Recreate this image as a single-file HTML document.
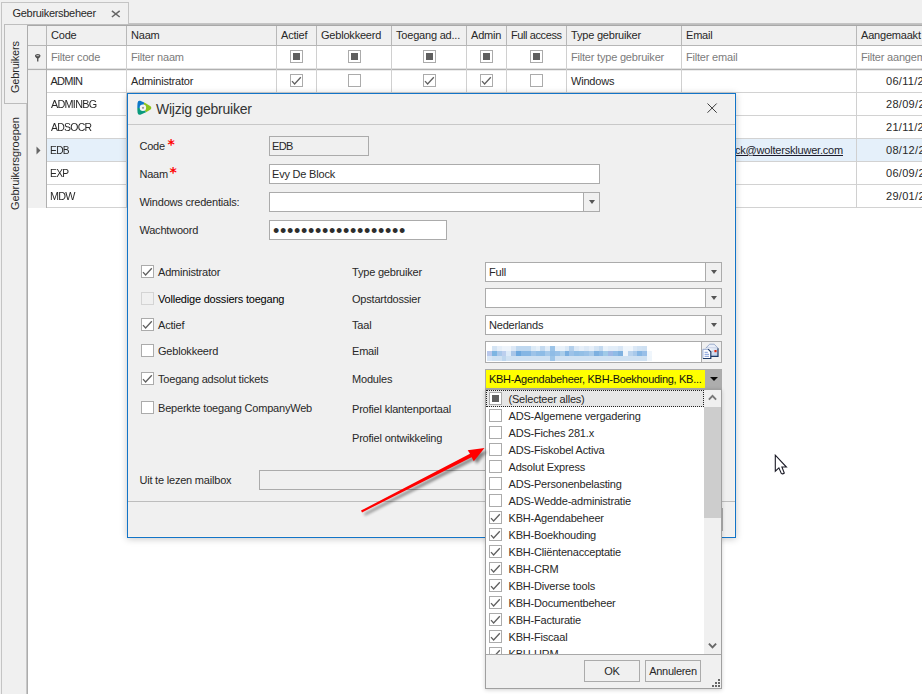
<!DOCTYPE html>
<html lang="nl"><head><meta charset="utf-8"><title>Gebruikersbeheer</title>
<style>
*{box-sizing:border-box;margin:0;padding:0}
html,body{width:922px;height:694px;overflow:hidden;background:#f0f0f0}
body{position:relative;font-family:"Liberation Sans",sans-serif;font-size:11px;color:#282828;letter-spacing:-0.2px;line-height:13px}
div,span,i,svg{position:absolute}
.t{white-space:nowrap;height:13px;line-height:13px}
.ph{color:#7c7c7c}
.vl{width:1px;background:#c6c6c6}
.hl{height:1px;background:#d2d2d2}
.cb{width:13px;height:13px;border:1px solid #ababab;background:#fff}
.cb svg{left:-1px;top:-1px}
.cb .ind{left:2px;top:2px;width:7px;height:7px;background:#5f5f5f}
.cb.dis{border-color:#d4d4d4;background:#f0f0f0}
.inp{border:1px solid #ababab;background:#fff;height:20px}
.btn{border:1px solid #ababab;background:#f0f0f0;text-align:center}
.arr{width:0;height:0;border-left:3.5px solid transparent;border-right:3.5px solid transparent;border-top:4px solid #555}
</style></head><body>

<div style="left:1px;top:2px;width:128px;height:23px;border:1px solid #c4c4c4;border-bottom:none;background:#f0f0f0"></div>
<div style="left:129px;top:23px;width:793px;height:1px;background:#c4c4c4"></div>
<div style="left:1px;top:24px;width:1px;height:670px;background:#c4c4c4"></div>
<span class="t" style="left:12.5px;top:7px;letter-spacing:-0.3px">Gebruikersbeheer</span>
<svg style="left:110.6px;top:9.5px" width="10" height="8" viewBox="0 0 10 8"><path d="M0.9 0.8 L8.7 7 M8.7 0.8 L0.9 7" stroke="#666" stroke-width="1.5" fill="none"/></svg>
<div style="left:4px;top:24px;width:23px;height:80px;border:1px solid #bcbcbc;border-right:none;background:#f0f0f0"></div>
<span class="t" style="left:9px;top:93px;transform-origin:0 0;transform:rotate(-90deg);width:60px;text-align:left">Gebruikers</span>
<span class="t" style="left:9px;top:210px;transform-origin:0 0;transform:rotate(-90deg);letter-spacing:-0.08px">Gebruikersgroepen</span>
<div style="left:28px;top:26px;width:894px;height:668px;background:#fff"></div>
<div style="left:5px;top:24px;width:917px;height:1px;background:#bebebe"></div>
<div style="left:27px;top:25px;width:895px;height:1px;background:#a8a8a8"></div>
<div style="left:27px;top:25px;width:1px;height:669px;background:#acacac"></div>
<div style="left:26px;top:104px;width:1px;height:590px;background:#c8c8c8"></div>
<div style="left:28px;top:26px;width:894px;height:19px;background:#f0f0f0"></div>
<div style="left:28px;top:26px;width:18px;height:182px;background:#f0f0f0"></div>
<div style="left:47px;top:139px;width:875px;height:22px;background:#e5f0fa"></div>
<div class="hl" style="left:28px;top:45px;width:894px;background:#b6b6b6"></div>
<div style="left:28px;top:68px;width:894px;height:1px;background:#e2e2e2"></div>
<div style="left:28px;top:69px;width:894px;height:1px;background:#b0b0b0"></div>
<div style="left:28px;top:70px;width:894px;height:1px;background:#ececec"></div>
<div class="hl" style="left:46px;top:92px;width:876px"></div>
<div class="hl" style="left:46px;top:115px;width:876px"></div>
<div class="hl" style="left:46px;top:138px;width:876px"></div>
<div class="hl" style="left:46px;top:161px;width:876px"></div>
<div class="hl" style="left:46px;top:184px;width:876px"></div>
<div class="hl" style="left:46px;top:207px;width:876px"></div>
<div class="vl" style="left:46px;top:26px;height:19px;background:#b8b8b8"></div>
<div class="vl" style="left:46px;top:46px;height:162px;background:#b0b0b0"></div>
<div class="vl" style="left:126px;top:26px;height:19px;background:#b8b8b8"></div>
<div class="vl" style="left:126px;top:46px;height:162px;background:#d0d0d0"></div>
<div class="vl" style="left:276px;top:26px;height:19px;background:#b8b8b8"></div>
<div class="vl" style="left:276px;top:46px;height:162px;background:#d0d0d0"></div>
<div class="vl" style="left:316px;top:26px;height:19px;background:#b8b8b8"></div>
<div class="vl" style="left:316px;top:46px;height:162px;background:#d0d0d0"></div>
<div class="vl" style="left:391px;top:26px;height:19px;background:#b8b8b8"></div>
<div class="vl" style="left:391px;top:46px;height:162px;background:#d0d0d0"></div>
<div class="vl" style="left:466px;top:26px;height:19px;background:#b8b8b8"></div>
<div class="vl" style="left:466px;top:46px;height:162px;background:#d0d0d0"></div>
<div class="vl" style="left:506px;top:26px;height:19px;background:#b8b8b8"></div>
<div class="vl" style="left:506px;top:46px;height:162px;background:#d0d0d0"></div>
<div class="vl" style="left:566px;top:26px;height:19px;background:#b8b8b8"></div>
<div class="vl" style="left:566px;top:46px;height:162px;background:#d0d0d0"></div>
<div class="vl" style="left:681px;top:26px;height:19px;background:#b8b8b8"></div>
<div class="vl" style="left:681px;top:46px;height:162px;background:#d0d0d0"></div>
<div class="vl" style="left:856px;top:26px;height:19px;background:#b8b8b8"></div>
<div class="vl" style="left:856px;top:46px;height:162px;background:#d0d0d0"></div>
<span class="t" style="left:51px;top:29px">Code</span>
<span class="t" style="left:131px;top:29px">Naam</span>
<span class="t" style="left:281px;top:29px">Actief</span>
<span class="t" style="left:321px;top:29px">Geblokkeerd</span>
<span class="t" style="left:396px;top:29px">Toegang ad...</span>
<span class="t" style="left:471px;top:29px">Admin</span>
<span class="t" style="left:511px;top:29px;letter-spacing:-0.4px">Full access</span>
<span class="t" style="left:571px;top:29px">Type gebruiker</span>
<span class="t" style="left:686px;top:29px">Email</span>
<span class="t" style="left:861px;top:29px">Aangemaakt</span>
<svg style="left:34.7px;top:53.6px" width="6" height="8" viewBox="0 0 6 8"><path d="M0.2 1.8 Q0.5 4 2.1 4.5 L2.1 7.4 L3.4 7.4 L3.4 4.5 Q5 4 5.3 1.8 Z" fill="#4c4c4c"/><ellipse cx="2.75" cy="1.7" rx="2.2" ry="1.1" fill="#e8e8e8" stroke="#4c4c4c" stroke-width="1.1"/></svg>
<span class="t ph" style="left:51px;top:51px">Filter code</span>
<span class="t ph" style="left:131px;top:51px">Filter naam</span>
<span class="t ph" style="left:571px;top:51px">Filter type gebruiker</span>
<span class="t ph" style="left:686px;top:51px">Filter email</span>
<span class="t ph" style="left:861px;top:51px">Filter aangemaakt</span>
<div class="cb " style="left:290px;top:50px"><i class="ind"></i></div>
<div class="cb " style="left:348px;top:50px"><i class="ind"></i></div>
<div class="cb " style="left:423px;top:50px"><i class="ind"></i></div>
<div class="cb " style="left:480px;top:50px"><i class="ind"></i></div>
<div class="cb " style="left:530px;top:50px"><i class="ind"></i></div>
<div class="cb " style="left:290px;top:74px"><svg width="13" height="13" viewBox="0 0 13 13"><path d="M2 7.1 L4.6 10 L10.8 3.2" fill="none" stroke="#606060" stroke-width="1.3"/></svg></div>
<div class="cb " style="left:348px;top:74px"></div>
<div class="cb " style="left:423px;top:74px"><svg width="13" height="13" viewBox="0 0 13 13"><path d="M2 7.1 L4.6 10 L10.8 3.2" fill="none" stroke="#606060" stroke-width="1.3"/></svg></div>
<div class="cb " style="left:480px;top:74px"><svg width="13" height="13" viewBox="0 0 13 13"><path d="M2 7.1 L4.6 10 L10.8 3.2" fill="none" stroke="#606060" stroke-width="1.3"/></svg></div>
<div class="cb " style="left:530px;top:74px"></div>
<span class="t" style="left:50.5px;top:75px;letter-spacing:-0.75px;transform-origin:0 50%;transform:scaleX(1.0)">ADMIN</span>
<span class="t" style="left:886px;top:75px;letter-spacing:0.3px">06/11/2017</span>
<span class="t" style="left:50.5px;top:98px;letter-spacing:-0.75px;transform-origin:0 50%;transform:scaleX(0.985)">ADMINBG</span>
<span class="t" style="left:886px;top:98px;letter-spacing:0.3px">28/09/2018</span>
<span class="t" style="left:50.5px;top:121px;letter-spacing:-0.75px;transform-origin:0 50%;transform:scaleX(0.95)">ADSOCR</span>
<span class="t" style="left:886px;top:121px;letter-spacing:0.3px">21/11/2018</span>
<span class="t" style="left:49.7px;top:144px;letter-spacing:-0.75px;transform-origin:0 50%;transform:scaleX(0.93)">EDB</span>
<span class="t" style="left:886px;top:144px;letter-spacing:0.3px">08/12/2020</span>
<span class="t" style="left:49.7px;top:167px;letter-spacing:-0.75px;transform-origin:0 50%;transform:scaleX(0.93)">EXP</span>
<span class="t" style="left:886px;top:167px;letter-spacing:0.3px">06/09/2019</span>
<span class="t" style="left:49.7px;top:190px;letter-spacing:-0.75px;transform-origin:0 50%;transform:scaleX(0.98)">MDW</span>
<span class="t" style="left:886px;top:190px;letter-spacing:0.3px">29/01/2021</span>
<span class="t" style="left:131px;top:75px">Administrator</span>
<span class="t" style="left:571px;top:75px">Windows</span>
<span class="t" style="right:79px;top:144px;text-decoration:underline;color:#1c1c2c">evy.deblock@wolterskluwer.com</span>
<svg style="left:36px;top:146px" width="5" height="9" viewBox="0 0 5 9"><path d="M0.5 0.5 L4.5 4.5 L0.5 8.5 Z" fill="#666"/></svg>
<div id="dlg" style="left:127px;top:93px;width:609px;height:445px;border:1px solid #1274c8;background:#f0f0f0;box-shadow:0 1px 7px rgba(0,0,0,.22),inset -1px -1px 0 #f7f3ee">
<div style="left:0;top:30px;width:607px;height:1px;background:#c8c8c8"></div>
<div style="left:0;top:407px;width:607px;height:1px;background:#bdbdbd"></div>
<svg style="left:9px;top:6px" width="15" height="16" viewBox="0 0 15 16"><defs><clipPath id="tri"><path d="M3.2 0.8 Q0.8 0.2 0.55 3 Q0.1 7.8 0.55 12.6 Q0.9 15.5 3.4 14.7 Q9 12.6 13.5 9.4 Q15.1 7.9 13.5 6.3 Q9 2.9 3.2 0.8 Z"/></clipPath></defs><g clip-path="url(#tri)"><path d="M5.9 7.9 L-5 8.1 L-5 -5 L9 -5 Z" fill="#0d78c8"/><path d="M5.9 7.9 L9 -5 L22 -5 L22 20 L15 20 Z" fill="#8cc31f"/><path d="M5.9 7.9 L15 20 L-5 20 L-5 8.1 Z" fill="#0a9a7c"/></g><circle cx="5.9" cy="7.8" r="3.2" fill="#f6f4f4"/><circle cx="6" cy="7.8" r="1.15" fill="#9a9a9a"/></svg>
<span class="t" style="left:28px;top:6px;font-size:14px;height:18px;line-height:18px;letter-spacing:-0.25px;color:#333">Wijzig gebruiker</span>
<svg style="left:579px;top:9px" width="11" height="11" viewBox="0 0 11 11"><path d="M0.5 0.5 L9.7 9.7 M9.7 0.5 L0.5 9.7" stroke="#3c3c3c" stroke-width="1" fill="none"/></svg>
<span class="t" style="left:11.400000000000006px;top:46px;">Code</span>
<span class="t" style="left:11.400000000000006px;top:74px;">Naam</span>
<span class="t" style="left:39.599999999999994px;top:42px;color:#ff0000;font-family:'DejaVu Sans','Liberation Sans',sans-serif;font-size:14px;line-height:16px;height:16px;font-weight:bold;letter-spacing:0">*</span>
<span class="t" style="left:41.599999999999994px;top:70px;color:#ff0000;font-family:'DejaVu Sans','Liberation Sans',sans-serif;font-size:14px;line-height:16px;height:16px;font-weight:bold;letter-spacing:0">*</span>
<span class="t" style="left:11.400000000000006px;top:102px;">Windows credentials:</span>
<span class="t" style="left:11.400000000000006px;top:130px;">Wachtwoord</span>
<div class="inp" style="left:141px;top:42px;width:100px;height:20px;background:#f0f0f0"><span class="t" style="left:2px;top:3px;letter-spacing:-0.7px">EDB</span></div>
<div class="inp" style="left:141px;top:70px;width:331px;height:20px;"><span class="t" style="left:2px;top:3px">Evy De Block</span></div>
<div class="inp" style="left:141px;top:98px;width:331px;height:20px;"><div style="left:313px;top:0;width:1px;height:18px;background:#ababab"></div><div style="left:314px;top:0;width:15px;height:18px;background:#f0f0f0"></div><i class="arr" style="left:318.5px;top:7px"></i></div>
<div class="inp" style="left:141px;top:126px;width:178px;height:20px;"><span class="t" style="left:3px;top:4px;font-size:18px;line-height:12px;height:12px;letter-spacing:0.7px;color:#2d2d2d">•••••••••••••••••••</span></div>
<div class="cb " style="left:13px;top:171px"><svg width="13" height="13" viewBox="0 0 13 13"><path d="M2 7.1 L4.6 10 L10.8 3.2" fill="none" stroke="#606060" stroke-width="1.3"/></svg></div>
<span class="t" style="left:30px;top:172px;">Administrator</span>
<div class="cb dis" style="left:13px;top:198px"></div>
<span class="t" style="left:30px;top:199px;color:#000;">Volledige dossiers toegang</span>
<div class="cb " style="left:13px;top:224px"><svg width="13" height="13" viewBox="0 0 13 13"><path d="M2 7.1 L4.6 10 L10.8 3.2" fill="none" stroke="#606060" stroke-width="1.3"/></svg></div>
<span class="t" style="left:30px;top:225px;">Actief</span>
<div class="cb " style="left:13px;top:250px"></div>
<span class="t" style="left:30px;top:251px;">Geblokkeerd</span>
<div class="cb " style="left:13px;top:278px"><svg width="13" height="13" viewBox="0 0 13 13"><path d="M2 7.1 L4.6 10 L10.8 3.2" fill="none" stroke="#606060" stroke-width="1.3"/></svg></div>
<span class="t" style="left:30px;top:279px;">Toegang adsolut tickets</span>
<div class="cb " style="left:13px;top:307px"></div>
<span class="t" style="left:30px;top:308px;">Beperkte toegang CompanyWeb</span>
<span class="t" style="left:224px;top:172px;">Type gebruiker</span>
<span class="t" style="left:224px;top:199px;">Opstartdossier</span>
<span class="t" style="left:224px;top:225px;">Taal</span>
<span class="t" style="left:224px;top:251px;">Email</span>
<span class="t" style="left:224px;top:279px;">Modules</span>
<span class="t" style="left:224px;top:309px;">Profiel klantenportaal</span>
<span class="t" style="left:224px;top:338px;">Profiel ontwikkeling</span>
<div class="inp" style="left:357px;top:168px;width:237px;height:20px;"><span class="t" style="left:3px;top:3px">Full</span><div style="left:219px;top:0;width:1px;height:18px;background:#ababab"></div><div style="left:220px;top:0;width:15px;height:18px;background:#f0f0f0"></div><i class="arr" style="left:224.5px;top:7px"></i></div>
<div class="inp" style="left:357px;top:194px;width:237px;height:20px;"><span class="t" style="left:3px;top:3px"></span><div style="left:219px;top:0;width:1px;height:18px;background:#ababab"></div><div style="left:220px;top:0;width:15px;height:18px;background:#f0f0f0"></div><i class="arr" style="left:224.5px;top:7px"></i></div>
<div class="inp" style="left:357px;top:221px;width:237px;height:20px;"><span class="t" style="left:3px;top:3px">Nederlands</span><div style="left:219px;top:0;width:1px;height:18px;background:#ababab"></div><div style="left:220px;top:0;width:15px;height:18px;background:#f0f0f0"></div><i class="arr" style="left:224.5px;top:7px"></i></div>
<div class="inp" style="left:357px;top:247px;width:237px;height:22px;"><div style="left:1px;top:4px;width:165px;height:15px;filter:blur(0.5px)"><div style="left:0;top:0;width:165px;height:5px;background:linear-gradient(90deg,#ffffff 0.00px,#ffffff 4.85px,#d4e4f4 4.85px,#d4e4f4 9.70px,#e6eff9 9.70px,#e6eff9 14.55px,#eef4fb 14.55px,#eef4fb 19.40px,#eef4fb 19.40px,#eef4fb 24.25px,#dce8f6 24.25px,#dce8f6 29.10px,#bfd8f0 29.10px,#bfd8f0 33.95px,#bfd8f0 33.95px,#bfd8f0 38.80px,#bfd8f0 38.80px,#bfd8f0 43.65px,#dceaf6 43.65px,#dceaf6 48.50px,#e6f0f9 48.50px,#e6f0f9 53.35px,#c4daf0 53.35px,#c4daf0 58.20px,#e0ecf8 58.20px,#e0ecf8 63.05px,#9cc4e8 63.05px,#9cc4e8 67.90px,#e8f1fa 67.90px,#e8f1fa 72.75px,#e8f1fa 72.75px,#e8f1fa 77.60px,#dae8f6 77.60px,#dae8f6 82.45px,#b4d0ec 82.45px,#b4d0ec 87.30px,#dde9f6 87.30px,#dde9f6 92.15px,#e6eff9 92.15px,#e6eff9 97.00px,#dde9f6 97.00px,#dde9f6 101.85px,#e6eff9 101.85px,#e6eff9 106.70px,#d4e4f4 106.70px,#d4e4f4 111.55px,#c4daf0 111.55px,#c4daf0 116.40px,#eaf2fa 116.40px,#eaf2fa 121.25px,#e2edf8 121.25px,#e2edf8 126.10px,#e2edf8 126.10px,#e2edf8 130.95px,#d8e6f5 130.95px,#d8e6f5 135.80px,#f0f6fc 135.80px,#f0f6fc 140.65px,#f0f6fc 140.65px,#f0f6fc 145.50px,#dbe8f6 145.50px,#dbe8f6 150.35px,#d2e3f4 150.35px,#d2e3f4 155.20px,#cfe1f3 155.20px,#cfe1f3 160.05px,#ffffff 160.05px,#ffffff 164.90px)"></div><div style="left:0;top:5px;width:165px;height:5px;background:linear-gradient(90deg,#b9c8ec 0.00px,#b9c8ec 4.85px,#7db5e2 4.85px,#7db5e2 9.70px,#a9c8ea 9.70px,#a9c8ea 14.55px,#bccfee 14.55px,#bccfee 19.40px,#dceaf8 19.40px,#dceaf8 24.25px,#a9c6e8 24.25px,#a9c6e8 29.10px,#6da8de 29.10px,#6da8de 33.95px,#85b6e4 33.95px,#85b6e4 38.80px,#85b6e4 38.80px,#85b6e4 43.65px,#9dc3e8 43.65px,#9dc3e8 48.50px,#90bde6 48.50px,#90bde6 53.35px,#8ebce6 53.35px,#8ebce6 58.20px,#a6c9ea 58.20px,#a6c9ea 63.05px,#8fbce6 63.05px,#8fbce6 67.90px,#98c1e8 67.90px,#98c1e8 72.75px,#aacdea 72.75px,#aacdea 77.60px,#7aafe0 77.60px,#7aafe0 82.45px,#9cc2e8 82.45px,#9cc2e8 87.30px,#8fbde6 87.30px,#8fbde6 92.15px,#93bfe6 92.15px,#93bfe6 97.00px,#9ac2e8 97.00px,#9ac2e8 101.85px,#a8caea 101.85px,#a8caea 106.70px,#7db0e0 106.70px,#7db0e0 111.55px,#8ab8e4 111.55px,#8ab8e4 116.40px,#a0cae8 116.40px,#a0cae8 121.25px,#9eb8e6 121.25px,#9eb8e6 126.10px,#8fbbe6 126.10px,#8fbbe6 130.95px,#7fb1e0 130.95px,#7fb1e0 135.80px,#eef4fb 135.80px,#eef4fb 140.65px,#b9d3ee 140.65px,#b9d3ee 145.50px,#a9c9ea 145.50px,#a9c9ea 150.35px,#86b6e4 150.35px,#86b6e4 155.20px,#98bfe8 155.20px,#98bfe8 160.05px,#f0f6fc 160.05px,#f0f6fc 164.90px)"></div><div style="left:0;top:10px;width:165px;height:4.6px;background:linear-gradient(90deg,#d8e6f5 0.00px,#d8e6f5 4.85px,#cfe1f2 4.85px,#cfe1f2 9.70px,#cfe1f2 9.70px,#cfe1f2 14.55px,#bdd6ee 14.55px,#bdd6ee 19.40px,#cfe1f2 19.40px,#cfe1f2 24.25px,#cfe1f2 24.25px,#cfe1f2 29.10px,#cfe1f2 29.10px,#cfe1f2 33.95px,#cfe1f2 33.95px,#cfe1f2 38.80px,#cfe1f2 38.80px,#cfe1f2 43.65px,#cfe1f2 43.65px,#cfe1f2 48.50px,#cfe1f2 48.50px,#cfe1f2 53.35px,#cfe1f2 53.35px,#cfe1f2 58.20px,#cfe1f2 58.20px,#cfe1f2 63.05px,#9cc4e8 63.05px,#9cc4e8 67.90px,#cfe1f2 67.90px,#cfe1f2 72.75px,#cfe1f2 72.75px,#cfe1f2 77.60px,#cfe1f2 77.60px,#cfe1f2 82.45px,#cfe1f2 82.45px,#cfe1f2 87.30px,#cfe1f2 87.30px,#cfe1f2 92.15px,#cfe1f2 92.15px,#cfe1f2 97.00px,#cfe1f2 97.00px,#cfe1f2 101.85px,#cfe1f2 101.85px,#cfe1f2 106.70px,#cfe1f2 106.70px,#cfe1f2 111.55px,#cfe1f2 111.55px,#cfe1f2 116.40px,#cfe1f2 116.40px,#cfe1f2 121.25px,#cfe1f2 121.25px,#cfe1f2 126.10px,#cfe1f2 126.10px,#cfe1f2 130.95px,#cfe1f2 130.95px,#cfe1f2 135.80px,#cfe1f2 135.80px,#cfe1f2 140.65px,#cfe1f2 140.65px,#cfe1f2 145.50px,#cfe1f2 145.50px,#cfe1f2 150.35px,#cfe1f2 150.35px,#cfe1f2 155.20px,#cfe1f2 155.20px,#cfe1f2 160.05px,#eef5fb 160.05px,#eef5fb 164.90px)"></div></div><div style="left:215px;top:0;width:1px;height:20px;background:#ababab"></div><div style="left:216px;top:0;width:19px;height:20px;background:#f0f0f0"></div><svg style="left:215.4px;top:0px" width="19" height="18" viewBox="0 0 19 18"><defs><linearGradient id="env" x1="0" y1="0" x2="1" y2="1"><stop offset="0" stop-color="#ffffff"/><stop offset="1" stop-color="#b4c8e8"/></linearGradient></defs><path d="M4.8 6.2 L8.6 2.2 L13.2 2.2 L17 6.2 Z" fill="#e9eef8" stroke="#93a6c8" stroke-width="0.9"/><rect x="4.8" y="6.2" width="12.2" height="8" fill="url(#env)"/><path d="M17 6.2 V14.4 H9.5" fill="none" stroke="#1f3a66" stroke-width="1.2"/><path d="M9.6 10.8 L12.4 8.9" stroke="#b8c2d4" stroke-width="0.8"/><rect x="13.4" y="8" width="2.2" height="2.2" fill="#e3290c"/><rect x="1.9" y="7.3" width="7.8" height="9" fill="#fff"/><path d="M1.9 16.3 V7.3 H7.4" fill="none" stroke="#8ba0cc" stroke-width="0.9"/><path d="M7.2 7.2 L9.8 9.8 V16.5 H1.9" fill="none" stroke="#1f3a66" stroke-width="1.2"/><path d="M3.6 10.3 H6.8 M3.6 12.3 H8 M3.6 14.3 H8" stroke="#6f8fd6" stroke-width="0.9"/></svg></div>
<div class="inp" style="left:357px;top:275px;width:237px;height:20px;"><div style="left:0;top:0;width:219px;height:18px;background:#ffff00"></div><span class="t" style="left:3px;top:3px;color:#111;letter-spacing:-0.3px">KBH-Agendabeheer, KBH-Boekhouding, KB...</span><div style="left:219px;top:0;width:16px;height:18px;background:#adadad"></div><i class="arr" style="left:224px;top:7px;border-top-color:#0a0a0a;border-left-width:4px;border-right-width:4px;border-top-width:4.5px"></i></div>
<span class="t" style="left:11.400000000000006px;top:380px;">Uit te lezen mailbox</span>
<div class="inp" style="left:131px;top:376px;width:330px;height:20px;background:#f0f0f0"></div>
<div style="left:512px;top:414px;width:83px;height:23px;border:1px solid #ababab;background:#f0f0f0"></div>
</div>
<div id="pop" style="left:485px;top:389px;width:237px;height:300px;border:1px solid #a0a0a0;background:#fff;box-shadow:0 1px 4px rgba(0,0,0,.18);overflow:hidden">
<div style="left:0;top:264px;width:235px;height:34px;background:#f0f0f0;border-top:1px solid #a8a8a8"></div>
<div style="left:0px;top:0px;width:218px;height:17px;background:#e6e6e6;border:1px dotted #222"></div>
<div style="left:0;top:0;width:218px;height:264px;overflow:hidden">
<div class="cb " style="left:3px;top:2px"><i class="ind"></i></div>
<span class="t" style="left:22.5px;top:3px">(Selecteer alles)</span>
<div class="cb " style="left:3px;top:19px"></div>
<span class="t" style="left:22.5px;top:20px">ADS-Algemene vergadering</span>
<div class="cb " style="left:3px;top:36px"></div>
<span class="t" style="left:22.5px;top:37px">ADS-Fiches 281.x</span>
<div class="cb " style="left:3px;top:53px"></div>
<span class="t" style="left:22.5px;top:54px">ADS-Fiskobel Activa</span>
<div class="cb " style="left:3px;top:70px"></div>
<span class="t" style="left:22.5px;top:71px">Adsolut Express</span>
<div class="cb " style="left:3px;top:87px"></div>
<span class="t" style="left:22.5px;top:88px">ADS-Personenbelasting</span>
<div class="cb " style="left:3px;top:104px"></div>
<span class="t" style="left:22.5px;top:105px">ADS-Wedde-administratie</span>
<div class="cb " style="left:3px;top:121px"><svg width="13" height="13" viewBox="0 0 13 13"><path d="M2 7.1 L4.6 10 L10.8 3.2" fill="none" stroke="#606060" stroke-width="1.3"/></svg></div>
<span class="t" style="left:22.5px;top:122px">KBH-Agendabeheer</span>
<div class="cb " style="left:3px;top:138px"><svg width="13" height="13" viewBox="0 0 13 13"><path d="M2 7.1 L4.6 10 L10.8 3.2" fill="none" stroke="#606060" stroke-width="1.3"/></svg></div>
<span class="t" style="left:22.5px;top:139px">KBH-Boekhouding</span>
<div class="cb " style="left:3px;top:155px"><svg width="13" height="13" viewBox="0 0 13 13"><path d="M2 7.1 L4.6 10 L10.8 3.2" fill="none" stroke="#606060" stroke-width="1.3"/></svg></div>
<span class="t" style="left:22.5px;top:156px">KBH-Cliëntenacceptatie</span>
<div class="cb " style="left:3px;top:172px"><svg width="13" height="13" viewBox="0 0 13 13"><path d="M2 7.1 L4.6 10 L10.8 3.2" fill="none" stroke="#606060" stroke-width="1.3"/></svg></div>
<span class="t" style="left:22.5px;top:173px">KBH-CRM</span>
<div class="cb " style="left:3px;top:189px"><svg width="13" height="13" viewBox="0 0 13 13"><path d="M2 7.1 L4.6 10 L10.8 3.2" fill="none" stroke="#606060" stroke-width="1.3"/></svg></div>
<span class="t" style="left:22.5px;top:190px">KBH-Diverse tools</span>
<div class="cb " style="left:3px;top:206px"><svg width="13" height="13" viewBox="0 0 13 13"><path d="M2 7.1 L4.6 10 L10.8 3.2" fill="none" stroke="#606060" stroke-width="1.3"/></svg></div>
<span class="t" style="left:22.5px;top:207px">KBH-Documentbeheer</span>
<div class="cb " style="left:3px;top:223px"><svg width="13" height="13" viewBox="0 0 13 13"><path d="M2 7.1 L4.6 10 L10.8 3.2" fill="none" stroke="#606060" stroke-width="1.3"/></svg></div>
<span class="t" style="left:22.5px;top:224px">KBH-Facturatie</span>
<div class="cb " style="left:3px;top:240px"><svg width="13" height="13" viewBox="0 0 13 13"><path d="M2 7.1 L4.6 10 L10.8 3.2" fill="none" stroke="#606060" stroke-width="1.3"/></svg></div>
<span class="t" style="left:22.5px;top:241px">KBH-Fiscaal</span>
<div class="cb " style="left:3px;top:257px"><svg width="13" height="13" viewBox="0 0 13 13"><path d="M2 7.1 L4.6 10 L10.8 3.2" fill="none" stroke="#606060" stroke-width="1.3"/></svg></div>
<span class="t" style="left:22.5px;top:258px">KBH-HRM</span>
</div>
<div style="left:218px;top:0;width:17px;height:264px;background:#f0f0f0"></div>
<div style="left:218px;top:17px;width:17px;height:111px;background:#cdcdcd"></div>
<svg style="left:222px;top:4.4px" width="9" height="7" viewBox="0 0 9 7"><path d="M0.9 5.6 L4.5 1.8 L8.1 5.6" fill="none" stroke="#787878" stroke-width="1.9"/></svg>
<svg style="left:222px;top:252px" width="9" height="7" viewBox="0 0 9 7"><path d="M0.9 1.6 L4.5 5.4 L8.1 1.6" fill="none" stroke="#686868" stroke-width="1.9"/></svg>
<div class="btn" style="left:98px;top:270px;width:56px;height:22px"><span class="t" style="left:0;width:54px;top:4px;text-align:center">OK</span></div>
<div class="btn" style="left:159px;top:270px;width:56px;height:22px"><span class="t" style="left:0;width:54px;top:4px;text-align:center;letter-spacing:-0.3px">Annuleren</span></div>
<i style="left:232px;top:289px;width:2px;height:2px;background:#666"></i><i style="left:229px;top:292px;width:2px;height:2px;background:#666"></i><i style="left:232px;top:292px;width:2px;height:2px;background:#666"></i><i style="left:226px;top:295px;width:2px;height:2px;background:#666"></i><i style="left:229px;top:295px;width:2px;height:2px;background:#666"></i><i style="left:232px;top:295px;width:2px;height:2px;background:#666"></i>
</div>
<svg style="left:340px;top:430px;overflow:visible" width="170" height="100" viewBox="340 430 170 100"><defs><filter id="sh" x="-10%" y="-20%" width="130%" height="150%"><feGaussianBlur stdDeviation="1.4"/></filter></defs><g transform="translate(3,3)" filter="url(#sh)" opacity="0.45"><path d="M361 510.6 L470 453.5 L467.5 450.5 L484.5 448 L473.8 461 L471.5 457 L362 512.4 Z" fill="#000"/></g><path d="M361 510.6 L470 453.8 L467.7 450.3 L484.5 448 L473.8 461.2 L471.6 457.2 L362 512.4 Z" fill="#ff0000"/></svg>
<svg style="left:774px;top:454px" width="14" height="21" viewBox="0 0 14 21"><path d="M1.3 1.2 V17.2 L4.9 13.9 L7.3 19.4 Q8.7 20.4 10.3 19 L7.9 13 L12.4 13 Z" fill="#fff" stroke="#1a1a26" stroke-width="1.1" stroke-linejoin="miter"/></svg>
</body></html>
